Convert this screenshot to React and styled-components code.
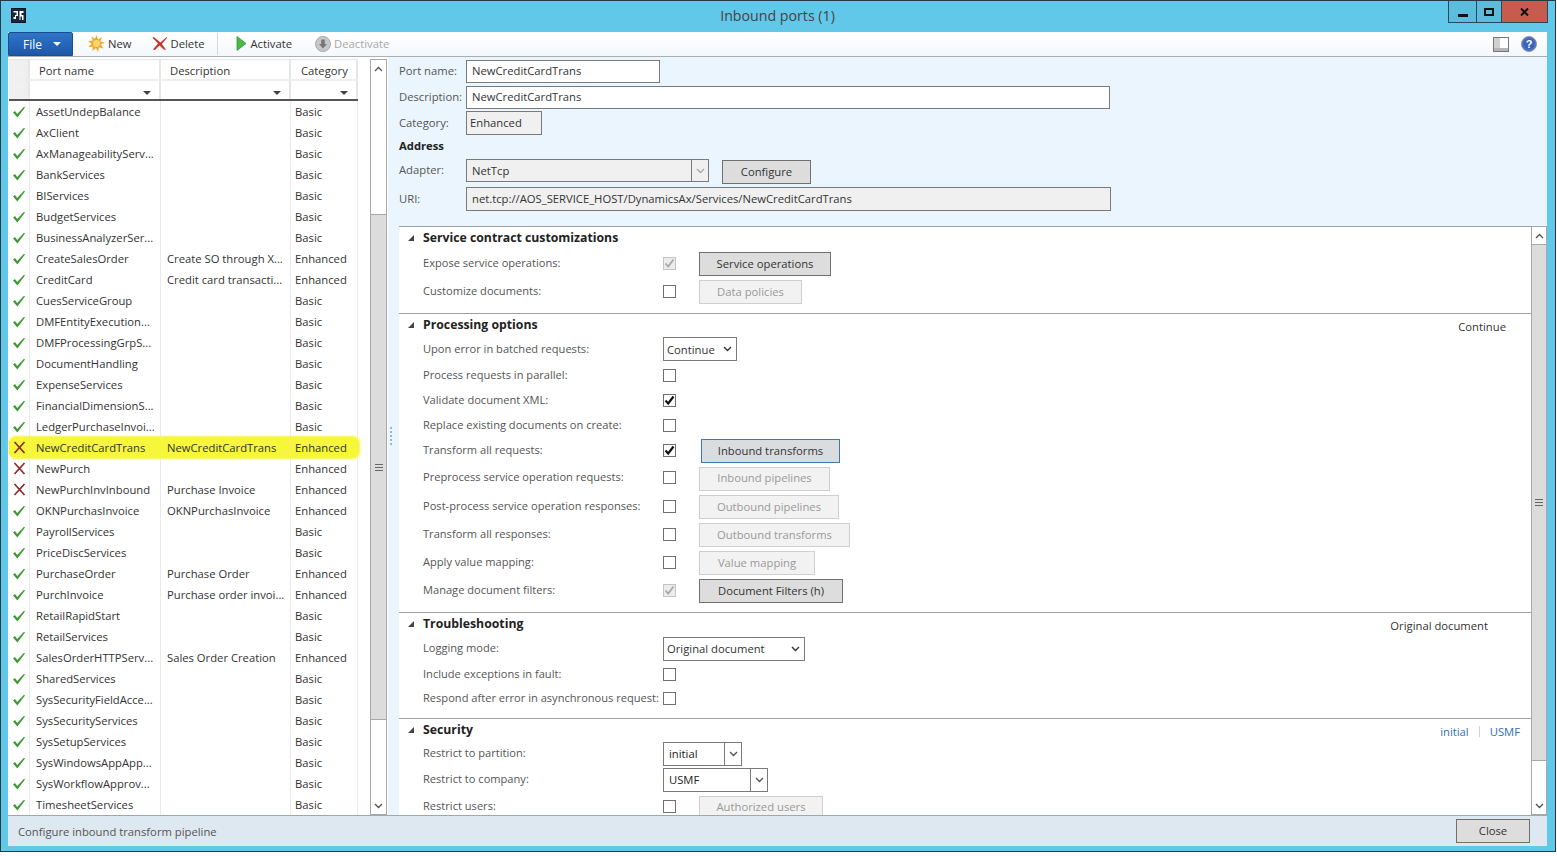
import styled, { createGlobalStyle } from 'styled-components';

const GlobalStyle = createGlobalStyle`
  html, body {
    margin: 0;
    padding: 0;
    background: #fff;
  }
  body {
    font-family: 'Open Sans', 'Noto Sans', sans-serif;
    font-size: 11.25px;
    color: #333;
  }
  * {
    box-sizing: border-box;
  }
`;

const Window = styled.div`
  width: 1556px;
  height: 852px;
  display: flex;
  flex-direction: column;
  padding: 0 8px 5px 7px;
  background: #62c8e9;
  border: 1px solid #263a46;
  overflow: hidden;
`;

const TitleBar = styled.div`
  height: 31px;
  flex: none;
  display: grid;
  grid-template-columns: 1fr auto 1fr;
  align-items: start;
`;

const AppIcon = styled.svg`
  width: 15px;
  height: 15px;
  margin: 7px 0 0 3px;
`;

const Title = styled.div`
  font-size: 14.2px;
  color: #444;
  padding-top: 5px;
`;

const WindowButtons = styled.div`
  justify-self: end;
  display: flex;
  height: 22px;
  margin-right: -1px;
  border: 1px solid #264a5c;
  border-top: 0;
`;

const WindowButton = styled.div`
  width: ${({ $w }) => $w}px;
  display: flex;
  align-items: center;
  justify-content: center;
  background: ${({ $close }) => ($close ? '#c75b50' : '#5bbcdc')};
  & + & {
    border-left: 1px solid #264a5c;
  }
`;

const Toolbar = styled.div`
  height: 25px;
  flex: none;
  display: flex;
  align-items: center;
  background: linear-gradient(#fff, #f4f8fb);
  border-bottom: 1px solid #a9b0b5;
`;

const FileButton = styled.div`
  width: 65px;
  height: 24px;
  margin-right: 15px;
  padding-left: 3px;
  display: flex;
  align-items: center;
  justify-content: center;
  gap: 11px;
  font-size: 12px;
  color: #fff;
  background: linear-gradient(#2f75c8, #1d57a8);
  border: 1px solid #1a4d94;
  border-radius: 2px 2px 0 0;
`;

const ToolButton = styled.div`
  display: flex;
  align-items: center;
  gap: 3px;
  padding-bottom: 1px;
  margin-right: ${({ $gap }) => $gap}px;
  color: ${({ $disabled }) => ($disabled ? '#a8a8a8' : '#333')};
`;

const ToolSeparator = styled.div`
  width: 1px;
  height: 22px;
  margin-right: 18px;
  background: #d5d9dc;
`;

const ToolbarEnd = styled.div`
  margin-left: auto;
  display: flex;
  align-items: center;
  gap: 12px;
  padding-right: 10px;
`;

const Body = styled.div`
  flex: 1;
  min-height: 0;
  display: flex;
`;

const LeftPanel = styled.div`
  width: 380px;
  flex: none;
  display: flex;
  gap: 12px;
  padding: 2px 1px 0 1px;
  background: #fff;
`;

const Grid = styled.div`
  width: 349px;
  flex: none;
`;

const GridRow = styled.div`
  display: grid;
  grid-template-columns: 21px 131px 130px 67px;
  height: ${({ $h }) => $h || 21}px;
  align-items: center;
  background: ${({ $hl }) => ($hl ? '#f6f63a' : 'transparent')};
  border-radius: ${({ $hl }) => ($hl ? '6px' : '0')};
  box-shadow: ${({ $hl }) => ($hl ? '1px 0 2px 1px #f6f63a' : 'none')};
`;

const HeaderRow = styled(GridRow)`
  background: #fff;
  border-top: 1px solid #e4e6e8;
  border-bottom: 2px solid #eceef0;
`;

const FilterRow = styled(GridRow)`
  border-bottom: 2px solid #555;
`;

const HeaderCell = styled.div`
  height: 100%;
  padding-left: ${({ $pl }) => $pl}px;
  padding-top: 1px;
  display: flex;
  align-items: center;
  border-right: 2px solid #e4e6e8;
  background: ${({ $corner }) => ($corner ? '#f0f0f0' : '#fff')};
`;

const FilterCell = styled.div`
  height: 100%;
  position: relative;
  background: ${({ $corner }) => ($corner ? '#f0f0f0' : '#fff')};
  border-right: 2px solid #e4e6e8;
  &::after {
    content: ${({ $corner }) => ($corner ? 'none' : "''")};
    position: absolute;
    right: 8px;
    bottom: 4px;
    border: 4px solid transparent;
    border-top: 4px solid #444;
    border-bottom: 0;
  }
`;

const IconCell = styled.div`
  height: 100%;
  display: flex;
  align-items: center;
  justify-content: center;
  border-right: 1px solid ${({ $hl }) => ($hl ? 'transparent' : '#e8eaec')};
`;

const Cell = styled.div`
  height: 100%;
  display: flex;
  align-items: center;
  padding-left: ${({ $pl }) => $pl}px;
  white-space: nowrap;
  overflow: hidden;
  border-right: 1px solid ${({ $hl }) => ($hl ? 'transparent' : '#e8eaec')};
`;

const ScrollBar = styled.div`
  width: ${({ $w }) => $w || 17}px;
  flex: none;
  display: flex;
  flex-direction: column;
  border: 1px solid #a8a8a8;
  background: #fff;
`;

const ScrollArrow = styled.div`
  height: 17px;
  flex: none;
  display: flex;
  align-items: center;
  justify-content: center;
  background: #fff;
`;

const ScrollSpace = styled.div`
  height: ${({ $h }) => $h}px;
  flex: none;
  background: #fff;
`;

const ScrollThumb = styled.div`
  flex: 1;
  display: flex;
  align-items: center;
  justify-content: center;
  background: #dcdcdc;
  border-top: 1px solid #a8a8a8;
  border-bottom: 1px solid #a8a8a8;
`;

const Grip = styled.div`
  width: 8px;
  height: 7px;
  border-top: 1px solid #666;
  border-bottom: 1px solid #666;
  position: relative;
  &::after {
    content: '';
    position: absolute;
    left: 0;
    right: 0;
    top: 2px;
    height: 1px;
    background: #666;
  }
`;

const RightPanel = styled.div`
  flex: 1;
  min-width: 0;
  display: flex;
  background: #eaf5fe;
`;

const Splitter = styled.div`
  width: 11px;
  flex: none;
  display: flex;
  flex-direction: column;
  justify-content: center;
  gap: 2px;
  padding-left: 2px;
`;

const SplitterDot = styled.div`
  width: 2px;
  height: 2px;
  background: #9fb4c6;
`;

const Content = styled.div`
  flex: 1;
  min-width: 0;
  display: flex;
  flex-direction: column;
`;

const Form = styled.div`
  height: 169px;
  flex: none;
  padding-top: 1px;
`;

const FormRow = styled.div`
  height: ${({ $h }) => $h}px;
  flex: none;
  display: flex;
  align-items: center;
`;

const FormLabel = styled.div`
  width: 67px;
  flex: none;
  padding-bottom: 2px;
  color: #555;
`;

const SubHeading = styled.div`
  font-weight: 700;
  padding-bottom: 2px;
  color: #222;
`;

const TextBox = styled.div`
  width: ${({ $w }) => $w}px;
  height: ${({ $h }) => $h || 23}px;
  display: flex;
  align-items: center;
  padding-left: ${({ $pl }) => $pl || 5}px;
  padding-bottom: 2px;
  background: ${({ $grey }) => ($grey ? '#f0f0f0' : '#fff')};
  border: 1px solid #7a7a7a;
`;

const ComboBox = styled.div`
  width: ${({ $w }) => $w}px;
  height: ${({ $h }) => $h || 24}px;
  display: flex;
  align-items: center;
  justify-content: space-between;
  padding-left: ${({ $pl }) => $pl || 5}px;
  background: ${({ $grey }) => ($grey ? '#f0f0f0' : '#fff')};
  border: 1px solid #7a7a7a;
  color: ${({ $dark }) => ($dark ? '#222' : '#333')};
`;

const ComboArrow = styled.div`
  width: 17px;
  height: 100%;
  display: flex;
  align-items: center;
  justify-content: center;
  ${({ $ruled }) => ($ruled ? 'border-left: 1px solid #7a7a7a;' : '')}
`;

const Button = styled.div`
  width: ${({ $w }) => $w}px;
  height: 24px;
  margin-left: ${({ $ml }) => $ml || 0}px;
  margin-top: ${({ $mt }) => $mt || 0}px;
  padding-bottom: 2px;
  display: flex;
  align-items: center;
  justify-content: center;
  color: ${({ $state }) => ($state === 'disabled' ? '#999' : '#333')};
  background: ${({ $state }) =>
    $state === 'disabled' ? '#f2f2f2' : $state === 'focus' ? '#dadde0' : '#dddddd'};
  border: 1px solid
    ${({ $state }) =>
      $state === 'disabled' ? '#cfcfcf' : $state === 'focus' ? '#3c7aa8' : '#707070'};
  flex: none;
`;

const Sections = styled.div`
  flex: 1;
  min-height: 0;
  display: flex;
  background: #fff;
`;

const SectionList = styled.div`
  flex: 1;
  min-width: 0;
  overflow: hidden;
`;

const Section = styled.section`
  border-top: 1px solid #a0a0a0;
  padding-bottom: ${({ $pb }) => $pb || 0}px;
`;

const SectionHead = styled.div`
  height: 22px;
  display: flex;
  align-items: center;
  padding-left: 9px;
  padding-right: ${({ $pr }) => $pr || 0}px;
`;

const Triangle = styled.div`
  width: 0;
  height: 0;
  margin-right: 9px;
  border-left: 6px solid transparent;
  border-bottom: 6px solid #444;
`;

const SectionTitle = styled.div`
  font-size: 12.25px;
  font-weight: 700;
  padding-bottom: 2px;
  color: #222;
`;

const Summary = styled.div`
  margin-left: auto;
  padding-top: 3px;
  display: flex;
  align-items: center;
  color: #333;
`;

const SummaryLink = styled.span`
  color: #2f6fb5;
`;

const SummaryRule = styled.span`
  width: 1px;
  height: 11px;
  margin: 0 10px;
  background: #c8d4de;
`;

const FieldRow = styled.div`
  height: ${({ $h }) => $h}px;
  display: flex;
  align-items: center;
  padding-left: 24px;
`;

const FieldLabel = styled.div`
  width: 240px;
  flex: none;
  padding-bottom: 2px;
  font-size: 11.1px;
  color: #555;
  white-space: nowrap;
`;

const CheckBox = styled.div`
  width: 13px;
  height: 13px;
  margin-right: 23px;
  flex: none;
  display: flex;
  align-items: center;
  justify-content: center;
  background: ${({ $muted }) => ($muted ? '#ececec' : '#fff')};
  border: 1px solid ${({ $muted }) => ($muted ? '#c4c4c4' : '#707070')};
`;

const StatusBar = styled.div`
  height: 31px;
  flex: none;
  display: flex;
  align-items: center;
  justify-content: space-between;
  padding: 0 17px 0 10px;
  background: #dee8f0;
  border-top: 1px solid #a0a8ae;
  color: #555;
`;

const CheckIcon = ({ muted }) => (
  <svg width="11" height="11" viewBox="0 0 11 11">
    <path
      d="M1.5 5.5 L4.2 8.5 L9.5 1.5"
      fill="none"
      stroke={muted ? '#a8a8a8' : '#111'}
      strokeWidth={muted ? 1.8 : 2.2}
    />
  </svg>
);

const GreenCheck = () => (
  <svg width="14" height="12" viewBox="0 0 14 12">
    <path d="M1 6.5 L3 5 L5.2 8 L12 0.8 L13 1.6 L5.4 11.5 Z" fill="#3f9a36" />
  </svg>
);

const RedCross = ({ size = 13 }) => (
  <svg width={size} height={size} viewBox="0 0 13 13">
    <path d="M1.5 1 L11.5 12 M11.5 1 L1.5 12" stroke="#8e2a2a" strokeWidth="1.7" fill="none" />
  </svg>
);

const ChevronDown = ({ color = '#555' }) => (
  <svg width="9" height="6" viewBox="0 0 9 6">
    <path d="M1 1 L4.5 4.5 L8 1" fill="none" stroke={color} strokeWidth="1.4" />
  </svg>
);

const ChevronUp = () => (
  <svg width="9" height="6" viewBox="0 0 9 6">
    <path d="M1 5 L4.5 1.5 L8 5" fill="none" stroke="#555" strokeWidth="1.3" />
  </svg>
);

const Sun = () => (
  <svg width="17" height="17" viewBox="0 0 17 17">
    <path
      d="M8.5 0 L10 4.5 L14 2 L12.3 6.4 L17 7.5 L12.8 9.5 L15.5 13.5 L11 12.4 L10 17 L8 13 L4.5 16 L4.8 11.8 L0.5 12 L3.6 8.7 L0 6 L4.7 5.5 L3.5 1.5 L7 3.8 Z"
      fill="#f3a82b"
    />
    <circle cx="8.5" cy="8.5" r="3.4" fill="#fbd774" />
  </svg>
);

const BigCross = () => (
  <svg width="16" height="15" viewBox="0 0 17 15">
    <path d="M2 0.5 L9 6.5 L15.5 0.5 L16 1.5 L10.5 8 L15 14.5 L12.5 14 L8 9.5 L3 14.5 L1 14 L6.5 7.5 L0.5 1.5 Z" fill="#c5352b" />
  </svg>
);

const PlayIcon = () => (
  <svg width="11" height="15" viewBox="0 0 11 15">
    <path d="M1 0.5 L10 7.5 L1 14.5 Z" fill="#4cb848" stroke="#2f8a2e" strokeWidth="0.7" />
  </svg>
);

const DeactivateIcon = () => (
  <svg width="16" height="16" viewBox="0 0 16 16">
    <circle cx="8" cy="8" r="7.5" fill="#c8c8c8" stroke="#a8a8a8" />
    <path d="M6.2 3.5 H9.8 V8 H12 L8 12.5 L4 8 H6.2 Z" fill="#777" />
  </svg>
);

const PaneIcon = () => (
  <svg width="16" height="15" viewBox="0 0 16 15">
    <rect x="0.5" y="0.5" width="15" height="14" fill="#fff" stroke="#777" />
    <rect x="1" y="1" width="6" height="10" fill="#d0d0d0" />
    <rect x="1" y="11" width="14" height="3" fill="#b5b5b5" />
  </svg>
);

const HelpIcon = () => (
  <svg width="16" height="16" viewBox="0 0 16 16">
    <circle cx="8" cy="8" r="7.5" fill="#3a64b4" stroke="#8a9ab8" />
    <circle cx="8" cy="8" r="6.2" fill="none" stroke="#6f90d0" strokeWidth="0.6" />
    <text x="8" y="12" textAnchor="middle" fontSize="11" fontWeight="700" fill="#fff" fontFamily="Liberation Sans, sans-serif">?</text>
  </svg>
);

const ports = [
  ['AssetUndepBalance', '', 'Basic'],
  ['AxClient', '', 'Basic'],
  ['AxManageabilityServ...', '', 'Basic'],
  ['BankServices', '', 'Basic'],
  ['BIServices', '', 'Basic'],
  ['BudgetServices', '', 'Basic'],
  ['BusinessAnalyzerSer...', '', 'Basic'],
  ['CreateSalesOrder', 'Create SO through X...', 'Enhanced'],
  ['CreditCard', 'Credit card transacti...', 'Enhanced'],
  ['CuesServiceGroup', '', 'Basic'],
  ['DMFEntityExecution...', '', 'Basic'],
  ['DMFProcessingGrpS...', '', 'Basic'],
  ['DocumentHandling', '', 'Basic'],
  ['ExpenseServices', '', 'Basic'],
  ['FinancialDimensionS...', '', 'Basic'],
  ['LedgerPurchaseInvoi...', '', 'Basic'],
  ['NewCreditCardTrans', 'NewCreditCardTrans', 'Enhanced', 'off', true],
  ['NewPurch', '', 'Enhanced', 'off'],
  ['NewPurchInvInbound', 'Purchase Invoice', 'Enhanced', 'off'],
  ['OKNPurchasInvoice', 'OKNPurchasInvoice', 'Enhanced'],
  ['PayrollServices', '', 'Basic'],
  ['PriceDiscServices', '', 'Basic'],
  ['PurchaseOrder', 'Purchase Order', 'Enhanced'],
  ['PurchInvoice', 'Purchase order invoi...', 'Enhanced'],
  ['RetailRapidStart', '', 'Basic'],
  ['RetailServices', '', 'Basic'],
  ['SalesOrderHTTPServ...', 'Sales Order Creation', 'Enhanced'],
  ['SharedServices', '', 'Basic'],
  ['SysSecurityFieldAcce...', '', 'Basic'],
  ['SysSecurityServices', '', 'Basic'],
  ['SysSetupServices', '', 'Basic'],
  ['SysWindowsAppApp...', '', 'Basic'],
  ['SysWorkflowApprov...', '', 'Basic'],
  ['TimesheetServices', '', 'Basic'],
];

const App = () => (
  <>
    <GlobalStyle />
    <Window>
      <TitleBar>
        <AppIcon viewBox="0 0 15 15">
          <rect x="0.5" y="0.5" width="14" height="14" fill="#1a2a3c" stroke="#0c1520" />
          <path d="M2.5 3 H7 V8 H5 V11 H2.5 V9 H4 V7 H5.5 V4.5 H2.5 Z" fill="#fff" />
          <path d="M8.5 3 H12.5 V5 H10.5 V7 H12.5 V12 H11 V8.5 H9.5 V12 H8.5 Z" fill="#fff" />
        </AppIcon>
        <Title>Inbound ports (1)</Title>
        <WindowButtons>
          <WindowButton $w={27}>
            <svg width="10" height="14"><rect y="9" width="10" height="3" fill="#111" /></svg>
          </WindowButton>
          <WindowButton $w={25}>
            <svg width="10" height="8"><rect x="1" y="1" width="8" height="6" fill="none" stroke="#111" strokeWidth="2" /></svg>
          </WindowButton>
          <WindowButton $w={46} $close>
            <svg width="9" height="8"><path d="M1 0.5 L8 7.5 M8 0.5 L1 7.5" stroke="#111" strokeWidth="2" /></svg>
          </WindowButton>
        </WindowButtons>
      </TitleBar>

      <Toolbar>
        <FileButton>
          File
          <svg width="8" height="4"><path d="M0 0 H8 L4 4 Z" fill="#fff" /></svg>
        </FileButton>
        <ToolButton $gap={20}><Sun />New</ToolButton>
        <ToolButton $gap={13}><BigCross />Delete</ToolButton>
        <ToolSeparator />
        <ToolButton $gap={23}><PlayIcon />Activate</ToolButton>
        <ToolButton $disabled><DeactivateIcon />Deactivate</ToolButton>
        <ToolbarEnd>
          <PaneIcon />
          <HelpIcon />
        </ToolbarEnd>
      </Toolbar>

      <Body>
        <LeftPanel>
          <Grid>
            <HeaderRow $h={22}>
              <HeaderCell $corner />
              <HeaderCell $pl={9}>Port name</HeaderCell>
              <HeaderCell $pl={9}>Description</HeaderCell>
              <HeaderCell $pl={10}>Category</HeaderCell>
            </HeaderRow>
            <FilterRow $h={20}>
              <FilterCell $corner />
              <FilterCell />
              <FilterCell />
              <FilterCell />
            </FilterRow>
            {ports.map(([name, desc, cat, state, hl]) => (
              <GridRow key={name} $hl={hl}>
                <IconCell $hl={hl}>{state === 'off' ? <RedCross /> : <GreenCheck />}</IconCell>
                <Cell $pl={6} $hl={hl}>{name}</Cell>
                <Cell $pl={6} $hl={hl}>{desc}</Cell>
                <Cell $pl={4} $hl={hl}>{cat}</Cell>
              </GridRow>
            ))}
          </Grid>
          <ScrollBar>
            <ScrollArrow><ChevronUp /></ScrollArrow>
            <ScrollSpace $h={137} />
            <ScrollThumb><Grip /></ScrollThumb>
            <ScrollSpace $h={77} />
            <ScrollArrow><ChevronDown /></ScrollArrow>
          </ScrollBar>
        </LeftPanel>

        <RightPanel>
          <Splitter>
            {[0, 1, 2, 3, 4].map((i) => <SplitterDot key={i} />)}
          </Splitter>
          <Content>
            <Form>
              <FormRow $h={26}>
                <FormLabel>Port name:</FormLabel>
                <TextBox $w={194}>NewCreditCardTrans</TextBox>
              </FormRow>
              <FormRow $h={26}>
                <FormLabel>Description:</FormLabel>
                <TextBox $w={644}>NewCreditCardTrans</TextBox>
              </FormRow>
              <FormRow $h={26}>
                <FormLabel>Category:</FormLabel>
                <TextBox $w={76} $h={24} $grey $pl={3}>Enhanced</TextBox>
              </FormRow>
              <FormRow $h={21}>
                <SubHeading>Address</SubHeading>
              </FormRow>
              <FormRow $h={27}>
                <FormLabel>Adapter:</FormLabel>
                <ComboBox $w={243} $h={23} $grey>
                  NetTcp
                  <ComboArrow $ruled><ChevronDown color="#aaa" /></ComboArrow>
                </ComboBox>
                <Button $w={89} $ml={13} $mt={3}>Configure</Button>
              </FormRow>
              <FormRow $h={30}>
                <FormLabel>URI:</FormLabel>
                <TextBox $w={645} $h={24} $grey>net.tcp://AOS_SERVICE_HOST/DynamicsAx/Services/NewCreditCardTrans</TextBox>
              </FormRow>
            </Form>

            <Sections>
              <SectionList>
                <Section $pb={8}>
                  <SectionHead>
                    <Triangle />
                    <SectionTitle>Service contract customizations</SectionTitle>
                  </SectionHead>
                  <FieldRow $h={28}>
                    <FieldLabel>Expose service operations:</FieldLabel>
                    <CheckBox $muted><CheckIcon muted /></CheckBox>
                    <Button $w={132} $mt={2}>Service operations</Button>
                  </FieldRow>
                  <FieldRow $h={28}>
                    <FieldLabel>Customize documents:</FieldLabel>
                    <CheckBox />
                    <Button $w={103} $mt={2} $state="disabled">Data policies</Button>
                  </FieldRow>
                </Section>

                <Section $pb={8}>
                  <SectionHead $pr={25}>
                    <Triangle />
                    <SectionTitle>Processing options</SectionTitle>
                    <Summary>Continue</Summary>
                  </SectionHead>
                  <FieldRow $h={26}>
                    <FieldLabel>Upon error in batched requests:</FieldLabel>
                    <ComboBox $w={74} $pl={3}>
                      Continue
                      <ComboArrow><ChevronDown color="#333" /></ComboArrow>
                    </ComboBox>
                  </FieldRow>
                  <FieldRow $h={26}>
                    <FieldLabel>Process requests in parallel:</FieldLabel>
                    <CheckBox />
                  </FieldRow>
                  <FieldRow $h={24}>
                    <FieldLabel>Validate document XML:</FieldLabel>
                    <CheckBox><CheckIcon /></CheckBox>
                  </FieldRow>
                  <FieldRow $h={26}>
                    <FieldLabel>Replace existing documents on create:</FieldLabel>
                    <CheckBox />
                  </FieldRow>
                  <FieldRow $h={25}>
                    <FieldLabel>Transform all requests:</FieldLabel>
                    <CheckBox><CheckIcon /></CheckBox>
                    <Button $w={139} $ml={2} $mt={1} $state="focus">Inbound transforms</Button>
                  </FieldRow>
                  <FieldRow $h={29}>
                    <FieldLabel>Preprocess service operation requests:</FieldLabel>
                    <CheckBox />
                    <Button $w={131} $mt={2} $state="disabled">Inbound pipelines</Button>
                  </FieldRow>
                  <FieldRow $h={28}>
                    <FieldLabel>Post-process service operation responses:</FieldLabel>
                    <CheckBox />
                    <Button $w={140} $mt={2} $state="disabled">Outbound pipelines</Button>
                  </FieldRow>
                  <FieldRow $h={28}>
                    <FieldLabel>Transform all responses:</FieldLabel>
                    <CheckBox />
                    <Button $w={151} $mt={2} $state="disabled">Outbound transforms</Button>
                  </FieldRow>
                  <FieldRow $h={28}>
                    <FieldLabel>Apply value mapping:</FieldLabel>
                    <CheckBox />
                    <Button $w={116} $mt={2} $state="disabled">Value mapping</Button>
                  </FieldRow>
                  <FieldRow $h={28}>
                    <FieldLabel>Manage document filters:</FieldLabel>
                    <CheckBox $muted><CheckIcon muted /></CheckBox>
                    <Button $w={144} $mt={2}>Document Filters (h)</Button>
                  </FieldRow>
                </Section>

                <Section $pb={7}>
                  <SectionHead $pr={43}>
                    <Triangle />
                    <SectionTitle>Troubleshooting</SectionTitle>
                    <Summary>Original document</Summary>
                  </SectionHead>
                  <FieldRow $h={27}>
                    <FieldLabel>Logging mode:</FieldLabel>
                    <ComboBox $w={142} $pl={3}>
                      Original document
                      <ComboArrow><ChevronDown color="#333" /></ComboArrow>
                    </ComboBox>
                  </FieldRow>
                  <FieldRow $h={24}>
                    <FieldLabel>Include exceptions in fault:</FieldLabel>
                    <CheckBox />
                  </FieldRow>
                  <FieldRow $h={25}>
                    <FieldLabel>Respond after error in asynchronous request:</FieldLabel>
                    <CheckBox />
                  </FieldRow>
                </Section>

                <Section>
                  <SectionHead $pr={11}>
                    <Triangle />
                    <SectionTitle>Security</SectionTitle>
                    <Summary>
                      <SummaryLink>initial</SummaryLink>
                      <SummaryRule />
                      <SummaryLink>USMF</SummaryLink>
                    </Summary>
                  </SectionHead>
                  <FieldRow $h={25}>
                    <FieldLabel>Restrict to partition:</FieldLabel>
                    <ComboBox $w={79} $dark>
                      initial
                      <ComboArrow $ruled><ChevronDown /></ComboArrow>
                    </ComboBox>
                  </FieldRow>
                  <FieldRow $h={27}>
                    <FieldLabel>Restrict to company:</FieldLabel>
                    <ComboBox $w={105} $dark>
                      USMF
                      <ComboArrow $ruled><ChevronDown /></ComboArrow>
                    </ComboBox>
                  </FieldRow>
                  <FieldRow $h={27}>
                    <FieldLabel>Restrict users:</FieldLabel>
                    <CheckBox />
                    <Button $w={124} $mt={2} $state="disabled">Authorized users</Button>
                  </FieldRow>
                </Section>
              </SectionList>
              <ScrollBar $w={16}>
                <ScrollArrow><ChevronUp /></ScrollArrow>
                <ScrollThumb><Grip /></ScrollThumb>
                <ScrollSpace $h={36} />
                <ScrollArrow><ChevronDown /></ScrollArrow>
              </ScrollBar>
            </Sections>
          </Content>
        </RightPanel>
      </Body>

      <StatusBar>
        Configure inbound transform pipeline
        <Button $w={74}>Close</Button>
      </StatusBar>
    </Window>
  </>
);

export default App;
